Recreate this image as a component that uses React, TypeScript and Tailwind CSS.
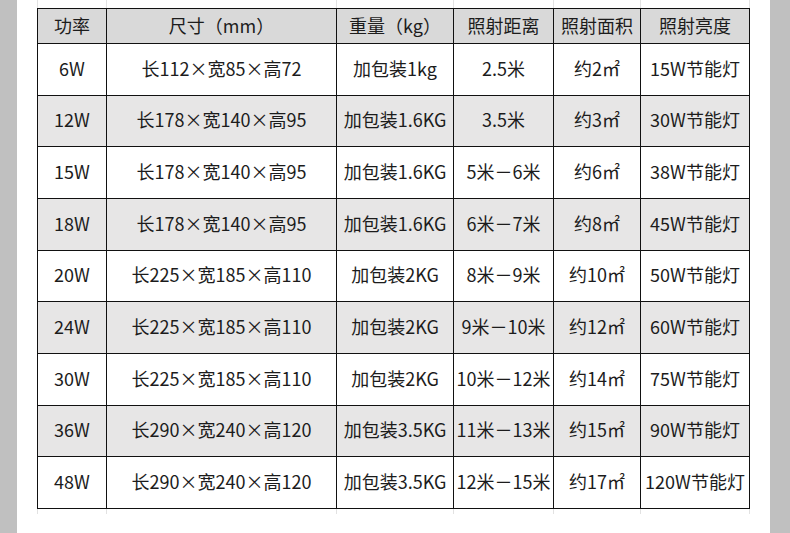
const COLS = ["w-[69px]", "w-[230px]", "w-[117px]", "w-[100px]", "w-[87px]", "w-[109px]"];

const HEADERS = ["功率", "尺寸（mm）", "重量（kg）", "照射距离", "照射面积", "照射亮度"];

const ROWS: string[][] = [
  ["6W", "长112×宽85×高72", "加包装1kg", "2.5米", "约2㎡", "15W节能灯"],
  ["12W", "长178×宽140×高95", "加包装1.6KG", "3.5米", "约3㎡", "30W节能灯"],
  ["15W", "长178×宽140×高95", "加包装1.6KG", "5米－6米", "约6㎡", "38W节能灯"],
  ["18W", "长178×宽140×高95", "加包装1.6KG", "6米－7米", "约8㎡", "45W节能灯"],
  ["20W", "长225×宽185×高110", "加包装2KG", "8米－9米", "约10㎡", "50W节能灯"],
  ["24W", "长225×宽185×高110", "加包装2KG", "9米－10米", "约12㎡", "60W节能灯"],
  ["30W", "长225×宽185×高110", "加包装2KG", "10米－12米", "约14㎡", "75W节能灯"],
  ["36W", "长290×宽240×高120", "加包装3.5KG", "11米－13米", "约15㎡", "90W节能灯"],
  ["48W", "长290×宽240×高120", "加包装3.5KG", "12米－15米", "约17㎡", "120W节能灯"],
];

function GhostLines({ height }: { height: string }) {
  // faint spreadsheet gridlines poking out above / below the table
  return (
    <div className={`flex ${height}`}>
      {COLS.map((w, i) => (
        <div key={i} className={`${w} border-l border-[#e2e2e2]`} />
      ))}
      <div className="border-l border-[#e2e2e2]" />
    </div>
  );
}

export default function App() {
  return (
    <div
      className="flex h-[533px] w-[790px] bg-white text-[18px] text-[#1c1c1c]"
      style={{ fontFamily: '"Noto Sans CJK SC", "Noto Sans", sans-serif' }}
    >
      <div className="w-[17px] shrink-0 bg-[#c0c0c0]" />
      <div className="ml-[20px] w-[733px]">
        <GhostLines height="h-[8px]" />
        <div className="w-[713px] border-l border-t border-[#111]">
          <div className="flex h-[35px] bg-[#d9d9d9]">
            {HEADERS.map((h, i) => (
              <div
                key={i}
                className={`${COLS[i]} flex items-center justify-center border-b border-r border-[#111] pb-[3px] leading-none`}
              >
                {h}
              </div>
            ))}
          </div>
          {ROWS.map((row, r) => (
            <div
              key={r}
              className={`flex h-[51.67px] ${r % 2 === 1 ? "bg-[#e7e6e6]" : "bg-white"}`}
            >
              {row.map((c, i) => (
                <div
                  key={i}
                  className={`${COLS[i]} flex items-center justify-center whitespace-nowrap border-b border-r border-[#111] pb-[3px] leading-none`}
                >
                  {c}
                </div>
              ))}
            </div>
          ))}
        </div>
        <GhostLines height="h-[5px]" />
      </div>
      <div className="ml-auto w-[20px] shrink-0 bg-[#c0c0c0]" />
    </div>
  );
}
